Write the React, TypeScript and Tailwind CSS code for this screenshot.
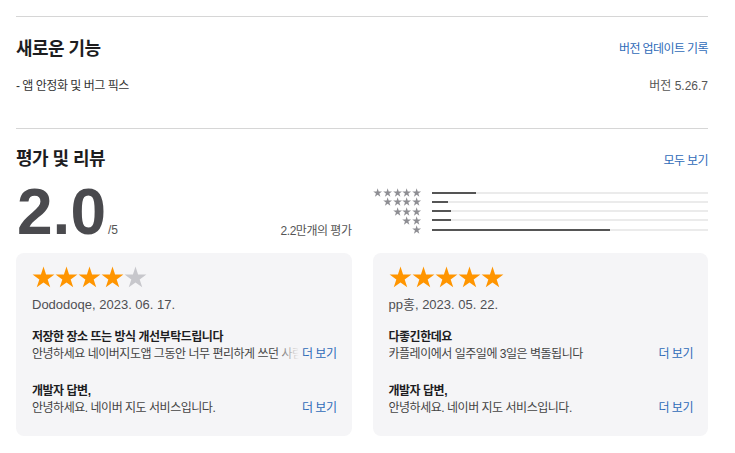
import React from "react";

const STAR_POINTS =
  "12,0.6 14.69,8.89 23.41,8.89 16.36,14.02 19.05,22.31 12,17.18 4.95,22.31 7.64,14.02 0.59,8.89 9.31,8.89";

const Star = ({ className }: { className: string }) => (
  <svg viewBox="0 0 24 23" className={className}>
    <polygon points={STAR_POINTS} fill="currentColor" />
  </svg>
);

const histogram = [
  { stars: 5, pct: 16 },
  { stars: 4, pct: 6 },
  { stars: 3, pct: 7 },
  { stars: 2, pct: 7 },
  { stars: 1, pct: 64.6 },
];

const reviews = [
  {
    rating: 4,
    author: "Dododoqe, 2023. 06. 17.",
    title: "저장한 장소 뜨는 방식 개선부탁드립니다",
    body: "안녕하세요 네이버지도앱 그동안 너무 편리하게 쓰던 사람입",
    fade: true,
  },
  {
    rating: 5,
    author: "pp홍, 2023. 05. 22.",
    title: "다좋긴한데요",
    body: "카플레이에서 일주일에 3일은 벽돌됩니다",
    fade: false,
  },
];

const ReviewCard = ({ review }: { review: (typeof reviews)[number] }) => (
  <div className="bg-[#f5f5f7] rounded-[8px] pl-4 pr-[15px] pt-[13px] h-[183px]">
    <div className="flex">
      {[1, 2, 3, 4, 5].map((n) => (
        <Star
          key={n}
          className={`w-[23px] h-[22px] ${n <= review.rating ? "text-[#ff9500]" : "text-[#c7c7cc]"}`}
        />
      ))}
    </div>
    <div className="mt-[8px] text-[13px] leading-[18px] text-[#4f4f53]">{review.author}</div>

    <div className="mt-[15px] text-[12px] leading-[17px] font-bold text-[#1d1d1f] tracking-[-0.04em]">
      {review.title}
    </div>
    <div className="flex items-center justify-between text-[12px] leading-[17px] tracking-[-0.04em]">
      <div className="relative min-w-0 flex-1 overflow-hidden whitespace-nowrap text-[#444]">
        {review.body}
        {review.fade && (
          <div className="absolute right-0 top-0 h-full w-[24px] bg-gradient-to-r from-transparent to-[#f5f5f7]" />
        )}
      </div>
      <a className="shrink-0 pl-[3px] text-[#2f6bb8]">더 보기</a>
    </div>

    <div className="mt-[20px] text-[12px] leading-[17px] font-bold text-[#1d1d1f] tracking-[-0.04em]">
      개발자 답변,
    </div>
    <div className="flex items-center justify-between text-[12px] leading-[17px] tracking-[-0.04em]">
      <span className="text-[#444]">안녕하세요. 네이버 지도 서비스입니다.</span>
      <a className="text-[#2f6bb8]">더 보기</a>
    </div>
  </div>
);

export default function App() {
  return (
    <div className="min-h-screen bg-white font-['Liberation_Sans','Noto_Sans_CJK_KR',sans-serif] text-[#1d1d1f]">
      <div className="ml-4 w-[692px] pt-4">
        {/* 새로운 기능 */}
        <section className="border-t border-[#d6d6d6] pt-5 pb-[33px]">
          <div className="flex h-6 items-center justify-between">
            <h2 className="text-[18px] font-bold tracking-[-0.03em]">새로운 기능</h2>
            <a className="text-[12px] tracking-[-0.05em] text-[#2f6bb8]">버전 업데이트 기록</a>
          </div>
          <div className="mt-4 flex justify-between text-[12px] leading-[18px] text-[#333]">
            <span className="tracking-[-0.04em]">- 앱 안정화 및 버그 픽스</span>
            <span className="text-[#555]">버전 5.26.7</span>
          </div>
        </section>

        {/* 평가 및 리뷰 */}
        <section className="border-t border-[#d6d6d6] pt-[18px]">
          <div className="flex h-6 items-center justify-between">
            <h2 className="text-[18px] font-bold tracking-[-0.03em]">평가 및 리뷰</h2>
            <a className="text-[12px] tracking-[-0.05em] text-[#2f6bb8] mt-1">모두 보기</a>
          </div>

          <div className="mt-[9px] grid h-[66px] grid-cols-2 gap-x-[21px]">
            <div className="flex items-end justify-between pb-[6px]">
              <div className="flex items-baseline">
                <span className="ml-[1px] text-[64px] leading-[64px] font-bold text-[#4a4a4e]">2.0</span>
                <span className="ml-[2px] text-[12px] text-[#555]">/5</span>
              </div>
              <span className="mb-[4px] text-[12px] tracking-[-0.04em] text-[#555]">2.2만개의 평가</span>
            </div>

            <div className="flex flex-col pt-[8px]">
              {histogram.map((row) => (
                <div key={row.stars} className="flex h-[9.25px] items-center">
                  <div className="flex w-[49px] justify-end gap-[0.5px] text-[#8e8e93]">
                    {Array.from({ length: row.stars }).map((_, i) => (
                      <Star key={i} className="h-[9px] w-[9.3px]" />
                    ))}
                  </div>
                  <div className="ml-[10px] h-[2px] flex-1 bg-[#ebebeb]">
                    <div className="h-full bg-[#555]" style={{ width: `${row.pct}%` }} />
                  </div>
                </div>
              ))}
            </div>
          </div>

          <div className="mt-[7px] grid grid-cols-2 gap-x-[21px]">
            {reviews.map((r) => (
              <ReviewCard key={r.author} review={r} />
            ))}
          </div>
        </section>
      </div>
    </div>
  );
}
